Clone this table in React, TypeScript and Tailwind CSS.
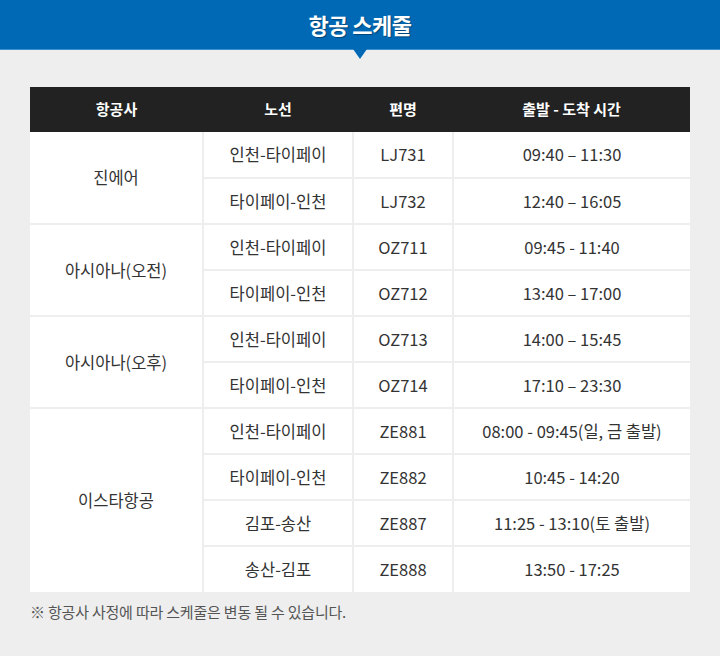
import React from "react";

type Row = { route: string; flight: string; time: string };
type Group = { airline: string; rows: Row[] };

const groups: Group[] = [
  {
    airline: "진에어",
    rows: [
      { route: "인천-타이페이", flight: "LJ731", time: "09:40 – 11:30" },
      { route: "타이페이-인천", flight: "LJ732", time: "12:40 – 16:05" },
    ],
  },
  {
    airline: "아시아나(오전)",
    rows: [
      { route: "인천-타이페이", flight: "OZ711", time: "09:45 - 11:40" },
      { route: "타이페이-인천", flight: "OZ712", time: "13:40 – 17:00" },
    ],
  },
  {
    airline: "아시아나(오후)",
    rows: [
      { route: "인천-타이페이", flight: "OZ713", time: "14:00 – 15:45" },
      { route: "타이페이-인천", flight: "OZ714", time: "17:10 – 23:30" },
    ],
  },
  {
    airline: "이스타항공",
    rows: [
      { route: "인천-타이페이", flight: "ZE881", time: "08:00 - 09:45(일, 금 출발)" },
      { route: "타이페이-인천", flight: "ZE882", time: "10:45 - 14:20" },
      { route: "김포-송산", flight: "ZE887", time: "11:25 - 13:10(토 출발)" },
      { route: "송산-김포", flight: "ZE888", time: "13:50 - 17:25" },
    ],
  },
];

const font = { fontFamily: '"Noto Sans CJK KR", "Noto Sans", sans-serif' };

export default function App() {
  return (
    <div className="w-[720px] h-[656px] bg-[#eeeeee] overflow-hidden" style={font}>
      <div className="relative h-[50px] bg-[#0069b6] border-b border-[#3d8fcf] flex items-center justify-center">
        <h1 className="text-white text-[22px] font-bold tracking-[-0.5px] [text-shadow:1px_1px_1px_rgba(0,0,0,0.35)]">
          항공 스케줄
        </h1>
        <div className="absolute left-1/2 -translate-x-1/2 top-full w-0 h-0 border-l-[7px] border-r-[7px] border-t-[10px] border-l-transparent border-r-transparent border-t-[#0069b6]" />
      </div>
      <div className="px-[30px] pt-[37px]">
        <table className="w-[660px] border-collapse table-fixed">
          <colgroup>
            <col className="w-[173px]" />
            <col className="w-[150px]" />
            <col className="w-[100px]" />
            <col className="w-[237px]" />
          </colgroup>
          <thead>
            <tr className="h-[45px] bg-[#222222] text-white text-[15px] font-bold">
              <th className="font-bold">항공사</th>
              <th className="font-bold">노선</th>
              <th className="font-bold">편명</th>
              <th className="font-bold">출발 - 도착 시간</th>
            </tr>
          </thead>
          <tbody className="bg-white text-[#333333] text-[16.5px]">
            {groups.map((g, gi) =>
              g.rows.map((r, ri) => {
                const top = gi === 0 && ri === 0 ? "" : "border-t-2";
                return (
                  <tr key={`${gi}-${ri}`} className="h-[46px]">
                    {ri === 0 && (
                      <td
                        rowSpan={g.rows.length}
                        className={`text-center border-[#eeeeee] ${gi === 0 ? "" : "border-t-2"}`}
                      >
                        {g.airline}
                      </td>
                    )}
                    <td className={`text-center border-l-2 border-[#eeeeee] ${top}`}>{r.route}</td>
                    <td className={`text-center border-l-2 border-[#eeeeee] ${top}`}>{r.flight}</td>
                    <td className={`text-center border-l-2 border-[#eeeeee] ${top}`}>{r.time}</td>
                  </tr>
                );
              })
            )}
          </tbody>
        </table>
        <p className="mt-[9px] text-[15px] text-[#555555] tracking-[-0.2px]">
          ※ 항공사 사정에 따라 스케줄은 변동 될 수 있습니다.
        </p>
      </div>
    </div>
  );
}
